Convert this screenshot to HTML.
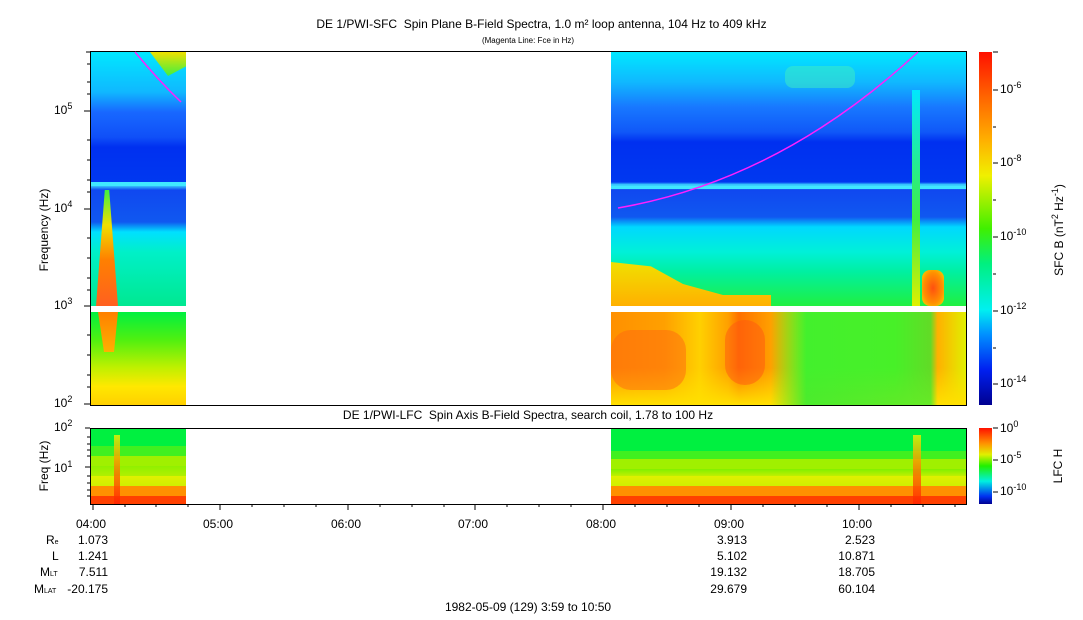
<!DOCTYPE html>
<html><head><meta charset="utf-8"><style>
body{margin:0;width:1083px;height:620px;background:#fff;position:relative;overflow:hidden;font-family:"Liberation Sans",sans-serif;font-size:12px;color:#000}
.a{position:absolute}
.t{position:absolute;white-space:nowrap}
sup{font-size:9px}
.sm{font-size:7px}
</style></head><body>
<div class="t" style="left:0;width:1083px;text-align:center;top:17px;">DE 1/PWI-SFC&nbsp; Spin Plane B-Field Spectra, 1.0 m² loop antenna, 104 Hz to 409 kHz</div>
<div class="t" style="left:0;width:1056px;text-align:center;top:36px;font-size:8px">(Magenta Line: Fce in Hz)</div>

<!-- left upper data -->
<div class="a" style="left:91px;top:52px;width:95px;height:254px;background:linear-gradient(#00e8ff 0px,#10b8ff 40px,#1868ff 60px,#1050f8 85px,#0030f0 95px,#0038f0 130px,#40e0ff 133px,#1048f0 138px,#1058f0 170px,#00e0ff 180px,#00f0c8 200px,#00e890 254px)"></div>
<div class="a" style="left:91px;top:182px;width:95px;height:4px;background:#40e8ff"></div>
<div class="a" style="left:96px;top:190px;width:22px;height:116px;clip-path:polygon(40% 0,60% 0,100% 100%,0 100%);background:linear-gradient(#40f040,#f0e000 30%,#ff8000 60%,#ff6020)"></div>
<div class="a" style="left:150px;top:52px;width:36px;height:24px;clip-path:polygon(0 0,100% 0,100% 60%,50% 100%);background:linear-gradient(#f0e000,#40f040)"></div>
<div class="a" style="left:91px;top:312px;width:95px;height:93px;background:linear-gradient(#00f040,#50f010 30%,#c0f000 60%,#ffe800 80%,#ffd000)"></div>
<div class="a" style="left:98px;top:312px;width:20px;height:40px;clip-path:polygon(0 0,100% 0,80% 100%,30% 100%);background:linear-gradient(#ff8000,#ffb000)"></div>

<!-- right upper data -->
<div class="a" style="left:611px;top:52px;width:355px;height:254px;background:linear-gradient(#00e8ff 0px,#10b8ff 30px,#1878ff 55px,#1058f8 80px,#0030f0 90px,#0038f0 130px,#40e0ff 133px,#1048f0 138px,#1058f0 165px,#00d8ff 175px,#00f0d8 200px,#00f0a0 220px,#20f040 254px)"></div>
<div class="a" style="left:611px;top:186px;width:355px;height:3px;background:#40e8ff"></div>
<div class="a" style="left:611px;top:262px;width:160px;height:44px;clip-path:polygon(0 0,25% 10%,45% 50%,70% 75%,100% 75%,100% 100%,0 100%);background:linear-gradient(#f0e000,#ffb000)"></div>
<div class="a" style="left:912px;top:90px;width:8px;height:216px;background:linear-gradient(#00e8ff,#40f040 60%,#e0f000)"></div>
<div class="a" style="left:922px;top:270px;width:22px;height:36px;background:radial-gradient(#ff5010,#ff9000 60%,#f0e000);border-radius:8px"></div>
<div class="a" style="left:785px;top:66px;width:70px;height:22px;background:#40f0c0;opacity:.5;border-radius:8px"></div>
<div class="a" style="left:611px;top:312px;width:355px;height:93px;background:linear-gradient(90deg,#ff9000 0%,#ffa000 15%,#ffd000 25%,#ffa000 33%,#ff7000 36%,#ffa000 45%,#e0f000 55%,#c0f000 80%,#ffb000 92%,#e0f000 100%)"></div>
<div class="a" style="left:611px;top:312px;width:355px;height:93px;background:linear-gradient(90deg,transparent 45%,rgba(0,240,64,.7) 55%,rgba(0,240,64,.6) 90%,transparent 92%),linear-gradient(transparent 60%,#ffe000)"></div>
<div class="a" style="left:611px;top:330px;width:75px;height:60px;background:#ff6810;opacity:.5;border-radius:20px"></div>
<div class="a" style="left:725px;top:320px;width:40px;height:65px;background:#ff5810;opacity:.5;border-radius:20px"></div>

<!-- main box -->
<div class="a" style="left:90px;top:51px;width:875px;height:353px;border:1px solid #000"></div>

<svg class="a" style="left:0;top:0" width="1083" height="620">
<g stroke="#000" fill="none" stroke-width="1">
<path d="M90 111h-6M90 209h-6M90 306h-6M90 404h-6M90 52h-4M90 64h-3M90 82h-3M90 94h-3M90 140h-3M90 160h-3M90 180h-3M90 192h-3M90 238h-3M90 258h-3M90 278h-3M90 290h-3M90 335h-3M90 355h-3M90 375h-3M90 387h-3"/>
<path d="M90 428h-5M90 467h-5M90 437h-3M90 444h-3M90 450h-3M90 456h-3M90 476h-3M90 483h-3M90 490h-3M90 496h-3"/>
<path d="M93 504v6M220 504v6M348 504v6M475 504v6M603 504v6M731 504v6M859 504v6M125 504v3M156 504v3M188 504v3M252 504v3M284 504v3M316 504v3M380 504v3M412 504v3M444 504v3M507 504v3M539 504v3M571 504v3M635 504v3M667 504v3M699 504v3M763 504v3M795 504v3M827 504v3M891 504v3M923 504v3M955 504v3"/>
<path d="M993 90h5M993 163h5M993 237h5M993 311h5M993 384h5M993 127h3M993 200h3M993 274h3M993 348h3M993 52h5M993 428h5M993 460h5M993 492h5"/>
</g>
<path d="M135 52 Q158 80 181 102" stroke="#ff20ff" stroke-width="1.5" fill="none"/>
<path d="M618 208 Q780 180 918 52" stroke="#ff20ff" stroke-width="1.5" fill="none"/>
</svg>

<!-- colorbars -->
<div class="a" style="left:979px;top:52px;width:13px;height:353px;background:linear-gradient(#ff1000,#ff6000 12%,#ffb000 25%,#f0f000 35%,#40f000 50%,#00f080 60%,#00f0f0 73%,#0090ff 80%,#0020f0 90%,#000090)"></div>
<div class="a" style="left:979px;top:428px;width:13px;height:76px;background:linear-gradient(#ff1000,#ff9000 20%,#e0f000 35%,#20f000 50%,#00f0e0 70%,#0030f0 90%,#000090)"></div>
<div class="t" style="left:1000px;top:80px">10<sup>-6</sup></div>
<div class="t" style="left:1000px;top:153px">10<sup>-8</sup></div>
<div class="t" style="left:1000px;top:227px">10<sup>-10</sup></div>
<div class="t" style="left:1000px;top:301px">10<sup>-12</sup></div>
<div class="t" style="left:1000px;top:374px">10<sup>-14</sup></div>
<div class="t" style="left:1000px;top:419px">10<sup>0</sup></div>
<div class="t" style="left:1000px;top:450px">10<sup>-5</sup></div>
<div class="t" style="left:1000px;top:482px">10<sup>-10</sup></div>
<div class="t" style="top:230px;transform:translate(-50%,-50%) rotate(-90deg);left:1058px">SFC B (nT<sup>2</sup> Hz<sup>-1</sup>)</div>
<div class="t" style="left:1058px;top:466px;transform:translate(-50%,-50%) rotate(-90deg)">LFC H</div>

<!-- y labels -->
<div class="t" style="left:54px;top:101px">10<sup>5</sup></div>
<div class="t" style="left:54px;top:199px">10<sup>4</sup></div>
<div class="t" style="left:54px;top:296px">10<sup>3</sup></div>
<div class="t" style="left:54px;top:394px">10<sup>2</sup></div>
<div class="t" style="left:44px;top:230px;transform:translate(-50%,-50%) rotate(-90deg)">Frequency (Hz)</div>
<div class="t" style="left:54px;top:418px">10<sup>2</sup></div>
<div class="t" style="left:54px;top:459px">10<sup>1</sup></div>
<div class="t" style="left:44px;top:466px;transform:translate(-50%,-50%) rotate(-90deg)">Freq (Hz)</div>

<div class="t" style="left:0;width:1056px;text-align:center;top:408px">DE 1/PWI-LFC&nbsp; Spin Axis B-Field Spectra, search coil, 1.78 to 100 Hz</div>

<!-- lower panel -->
<div class="a" style="left:91px;top:429px;width:95px;height:75px;background:linear-gradient(#00f040 0,#00f040 17px,#40f020 17px,#40f020 27px,#a0f000 27px,#a0f000 37px,#90f000 37px,#b0f000 47px,#e0f000 47px,#d0f000 57px,#ff9000 57px,#ff9000 67px,#ff4000 67px)"></div>
<div class="a" style="left:114px;top:435px;width:6px;height:69px;background:linear-gradient(#f0f000,#ff6000 60%,#ff2000);opacity:.8"></div>
<div class="a" style="left:611px;top:429px;width:355px;height:75px;background:linear-gradient(#00f040 0,#00f040 22px,#40f020 22px,#40f020 30px,#a0f000 30px,#a0f000 40px,#80f000 40px,#c0f000 47px,#e0f000 47px,#d0f000 57px,#ff9000 57px,#ff9000 67px,#ff4000 67px)"></div>
<div class="a" style="left:913px;top:435px;width:8px;height:69px;background:linear-gradient(#f0f000,#ff6000 60%,#ff2000);opacity:.8"></div>
<div class="a" style="left:90px;top:428px;width:875px;height:75px;border:1px solid #000"></div>

<!-- time labels -->
<div class="t" style="left:76px;top:517px">04:00</div>
<div class="t" style="left:203px;top:517px">05:00</div>
<div class="t" style="left:331px;top:517px">06:00</div>
<div class="t" style="left:458px;top:517px">07:00</div>
<div class="t" style="left:586px;top:517px">08:00</div>
<div class="t" style="left:714px;top:517px">09:00</div>
<div class="t" style="left:842px;top:517px">10:00</div>

<div class="t" style="left:46px;top:533px">R<span class="sm">e</span></div>
<div class="t" style="left:52px;top:549px">L</div>
<div class="t" style="left:40px;top:565px">M<span class="sm">LT</span></div>
<div class="t" style="left:34px;top:582px">M<span class="sm">LAT</span></div>
<div class="t" style="left:60px;width:48px;text-align:right;top:533px">1.073</div>
<div class="t" style="left:60px;width:48px;text-align:right;top:549px">1.241</div>
<div class="t" style="left:60px;width:48px;text-align:right;top:565px">7.511</div>
<div class="t" style="left:60px;width:48px;text-align:right;top:582px">-20.175</div>
<div class="t" style="left:690px;width:57px;text-align:right;top:533px">3.913</div>
<div class="t" style="left:690px;width:57px;text-align:right;top:549px">5.102</div>
<div class="t" style="left:690px;width:57px;text-align:right;top:565px">19.132</div>
<div class="t" style="left:690px;width:57px;text-align:right;top:582px">29.679</div>
<div class="t" style="left:818px;width:57px;text-align:right;top:533px">2.523</div>
<div class="t" style="left:818px;width:57px;text-align:right;top:549px">10.871</div>
<div class="t" style="left:818px;width:57px;text-align:right;top:565px">18.705</div>
<div class="t" style="left:818px;width:57px;text-align:right;top:582px">60.104</div>
<div class="t" style="left:0;width:1056px;text-align:center;top:600px">1982-05-09 (129) 3:59 to 10:50</div>
</body></html>
